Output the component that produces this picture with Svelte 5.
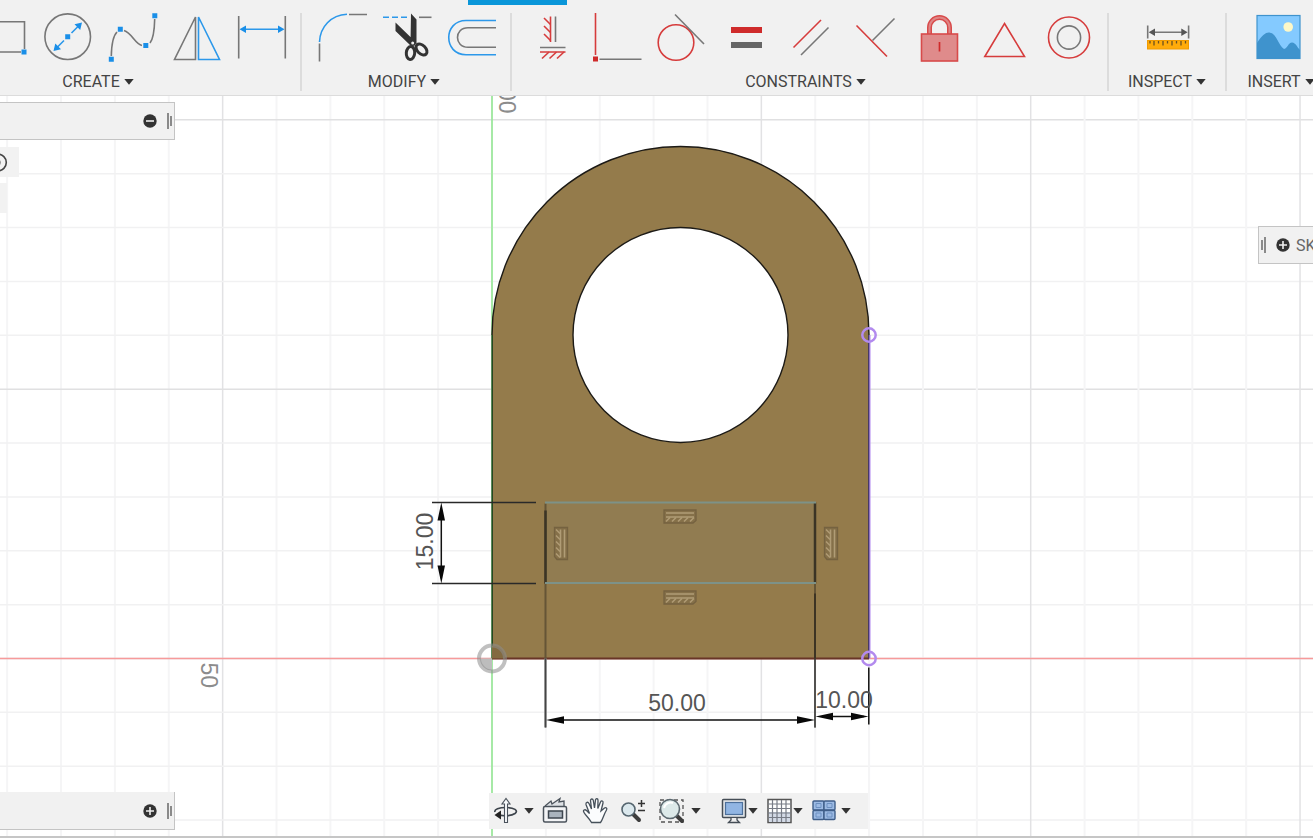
<script>
  const steps = Array.from({ length: 61 }, (_, i) => i - 20);
  const pitch = 53.87;
  const hatches = [0, 1, 2];
  const badges = [
    { x: 188, y: -142, turn: 0 },
    { x: 188, y: -61, turn: 0 },
    { x: 69, y: -115, turn: 90 },
    { x: 339, y: -115, turn: 90 }
  ];
</script>

{#snippet caret()}
  <svg class="caret" viewBox="0 0 10 6" aria-hidden="true"><path d="M0.300 0H9.700L5 5.800Z" fill="#333" /></svg>
{/snippet}

{#snippet knob(open)}
  <svg class="knob" viewBox="0 0 14 14" aria-hidden="true">
    <circle cx="7" cy="7" r="6.7" fill="#333" />
    <path d={open ? 'M3 7H11' : 'M3 7H11M7 3V11'} stroke="#f1f1f1" stroke-width="1.6" />
  </svg>
{/snippet}

<div class="app">
  <header class="ribbon">
    <span class="active-tab"></span>

    <section class="group create">
      <div class="tools">
        <button aria-label="Rectangle"><svg viewBox="0 0 65 54">
          <path class="gray" d="M20 8.7H56.5V36M53 39H20" />
          <rect x="53.5" y="36.5" width="5" height="5" fill="#1a8fe8" />
        </svg></button>
        <button aria-label="Circle"><svg viewBox="0 0 65 54">
          <circle class="gray" cx="34.7" cy="23.7" r="22.8" />
          <path class="blue" d="M38.5 20L45 13.500M31 27.500L24.500 34" />
          <path fill="#1a8fe8" d="M49 9.500L41.500 11.300L47.200 17ZM20.500 38L28 36.200L22.300 30.500ZM32.200 21.200h5v5h-5z" />
        </svg></button>
        <button aria-label="Spline"><svg viewBox="0 0 65 54">
          <path class="gray" d="M13.300 43C13.500 33 15 23 19 19M26 17.500C34 20 37 31 44 32.500M52 30C56 25 56.500 15 56.700 6" />
          <path fill="#1a8fe8" d="M10.800 43.700h5v5h-5zM19.800 13.700h5v5h-5zM45.300 30h5v5h-5zM54.300 0.300h5v5h-5z" />
        </svg></button>
        <button aria-label="Mirror"><svg viewBox="0 0 65 54">
          <path class="gray" d="M32.500 4V46.500H11.500Z" />
          <path class="blue" d="M35.500 4V46.500H56.500Z" />
        </svg></button>
        <button aria-label="Sketch dimension"><svg viewBox="0 0 65 54">
          <path class="gray" d="M10.700 3V45.500M57.300 3V45.500" />
          <path class="blue" d="M15 16.300H53" />
          <path fill="#1a8fe8" d="M11.500 16.300L18 12.500V20ZM56.500 16.300L50 12.500V20Z" />
        </svg></button>
      </div>
      <button class="menu">CREATE {@render caret()}</button>
    </section>

    <section class="group modify">
      <div class="tools">
        <button aria-label="Fillet"><svg viewBox="0 0 65 54">
          <path class="blue" d="M11.500 29C12 14 23 2 39 1.300" />
          <path class="gray" d="M41 1.500H59M11.500 30.500V48.500" />
        </svg></button>
        <button aria-label="Trim"><svg viewBox="0 0 65 54">
          <path class="blue" d="M10 4.300H36" stroke-dasharray="6 3" />
          <path class="gray" d="M46 4.300H58.500" />
          <path fill="#333" d="M22.500 9.500L39 25.500L40.500 31L37 32L22.500 18ZM38 0.500L43.500 6.500V31L37.500 30Z" />
          <ellipse class="loop" cx="37.500" cy="40" rx="4.200" ry="6.500" transform="rotate(5 37.500 40)" />
          <ellipse class="loop" cx="48.500" cy="36.500" rx="4.200" ry="6.500" transform="rotate(-45 48.500 36.500)" />
          <circle cx="39.700" cy="30" r="3" fill="#333" /><circle cx="39.700" cy="30" r="1.500" fill="#eee" />
        </svg></button>
        <button aria-label="Offset"><svg viewBox="0 0 65 54">
          <path class="blue" d="M58 7.500H28C5 7.500 5 41.700 28 41.700H58" />
          <path class="gray" d="M58 14.700H30C16 14.700 16 34.300 30 34.300H58" />
        </svg></button>
      </div>
      <button class="menu">MODIFY {@render caret()}</button>
    </section>

    <section class="group constraints">
      <div class="tools">
        <button aria-label="Horizontal/Vertical"><svg viewBox="0 0 65 54">
          <path class="gray" d="M38.500 3.500V29M23 34.500H48.500" />
          <path class="red" d="M33.500 3.500V29M23 39H48.500" />
          {#each hatches as i}
            <path class="red" d="M27 {5 + i * 8}L33.500 {11.5 + i * 8}" />
            <path class="red" d="M{32 + i * 7.5} 39L{25 + i * 7.5} 45.500" />
          {/each}
        </svg></button>
        <button aria-label="Coincident"><svg viewBox="0 0 65 54">
          <path class="red" d="M13.500 0V42" />
          <rect x="11" y="43.500" width="5" height="5" fill="#cf2b2b" />
          <path class="gray" d="M17.500 46.300H59.500" />
        </svg></button>
        <button aria-label="Tangent"><svg viewBox="0 0 65 54">
          <circle class="red" cx="29" cy="29.500" r="17.800" />
          <path class="gray" d="M28 1.500L57 31" />
        </svg></button>
        <button aria-label="Equal"><svg viewBox="0 0 65 54">
          <rect x="19" y="14" width="31" height="6" fill="#cf2b2b" />
          <rect x="19" y="29" width="31" height="6" fill="#666" />
        </svg></button>
        <button aria-label="Parallel"><svg viewBox="0 0 65 54">
          <path class="red" d="M16.500 34.500L44 7" />
          <path class="gray" d="M24 42L51.500 14.500" />
        </svg></button>
        <button aria-label="Perpendicular"><svg viewBox="0 0 65 54">
          <path class="gray" d="M30.500 27.500L52.500 5.500" />
          <path class="red" d="M14.500 12.500L45 43.500" />
        </svg></button>
        <button aria-label="Fix"><svg viewBox="0 0 65 54">
          <path d="M22.500 21V14.500A10 10 0 0 1 42.500 14.500V21" fill="none" stroke="#d84a4a" stroke-width="5" />
          <path d="M22.500 21V14.500A10 10 0 0 1 42.500 14.500V21" fill="none" stroke="#df8585" stroke-width="2" />
          <rect x="14.500" y="21" width="36" height="27" fill="#df8b8b" stroke="#d84a4a" stroke-width="1.600" />
          <path d="M32.500 29V38.500" stroke="#cf2b2b" stroke-width="1.700" />
        </svg></button>
        <button aria-label="Midpoint"><svg viewBox="0 0 65 54">
          <path class="red" d="M32.500 10.500L52.500 43.500H12.800Z" />
        </svg></button>
        <button aria-label="Concentric"><svg viewBox="0 0 65 54">
          <circle class="red" cx="32" cy="24.500" r="20.500" />
          <circle class="gray" cx="32" cy="24.500" r="11.600" />
        </svg></button>
      </div>
      <button class="menu">CONSTRAINTS {@render caret()}</button>
    </section>

    <section class="group inspect">
      <div class="tools">
        <button aria-label="Measure"><svg viewBox="0 0 65 54">
          <path class="gray" d="M13.700 12.500V25.500M54.600 12.500V25.500M18 19.300H50" />
          <path fill="#555" d="M14.700 19.300L21 15.500V23ZM53.600 19.300L47.300 15.500V23Z" />
          <rect x="13.500" y="27.500" width="41" height="8.500" fill="#ffab0a" stroke="#f09a00" />
          <path d="M16 28v2.500M20 28v4.500M24.500 28v2.500M29 28v4.500M33.500 28v2.500M38 28v4.500M42.500 28v2.500M47 28v4.500M51.500 28v2.500" stroke="#6b5020" stroke-width="1.300" />
        </svg></button>
      </div>
      <button class="menu">INSPECT {@render caret()}</button>
    </section>

    <section class="group insert">
      <div class="tools">
        <button aria-label="Insert canvas"><svg viewBox="0 0 65 54">
          <rect x="10" y="2.500" width="43" height="43" fill="#84caff" />
          <path d="M10 30C15 22 19 19 22.500 19.500C30 21 31 32 37 36C41 35 41 29.500 45 29.500C49 30 50 34 53 37V45.500H10Z" fill="#3f93cd" />
          <circle cx="41.200" cy="14" r="4.800" fill="#fdf8c8" />
          <rect x="10" y="2.500" width="43" height="43" fill="none" stroke="#3f93cd" stroke-width="1.200" />
        </svg></button>
      </div>
      <button class="menu">INSERT {@render caret()}</button>
    </section>
  </header>

  <main class="workspace">
    <svg class="drawing" role="img" aria-label="Sketch of a rounded plate with a hole and dimensions">
      <g transform="translate(492 562.500)">
        {#each steps as n}
          <path d="M{n * pitch} -600V400" stroke={n % 5 ? '#f5f5f6' : '#e2e2e4'} stroke-width={n % 5 ? 2 : 1.5} />
          <path d="M-600 {-n * pitch}H2500" stroke={n % 5 ? '#f1f1f2' : '#e0e0e1'} stroke-width="1.500" />
        {/each}
        <path d="M-600 0H2500" stroke="#f79a9a" stroke-width="1.500" />
        <path d="M0 -600V400" stroke="#8fe88f" stroke-width="1.500" />

        <path d="M0 0V-323.500A188.500 188.500 0 0 1 377 -323.500V0Z" fill="#947b4b" />
        <path d="M0 -323.500A188.500 188.500 0 0 1 377 -323.500" fill="none" stroke="#1c1a16" stroke-width="1.400" />
        <circle cx="188.500" cy="-323.500" r="107.500" fill="#fff" stroke="#1c1a16" stroke-width="1.400" />
        <path d="M0.200 -323.500V0" stroke="#1f4420" stroke-width="1.500" />
        <path d="M0 0H377" stroke="#693527" stroke-width="2" />
        <path d="M377.800 -323.500V0" stroke="#b690f0" stroke-width="1.500" />
        <path d="M376.700 -323.500V0" stroke="#44366b" stroke-width="1.300" />

        <rect x="53.500" y="-156" width="270" height="81" fill="#917c51" />
        <path d="M53.500 -155V0M323 -75V0" stroke="#655536" stroke-width="2" />
        <path d="M53.500 -148V-75M323 -156V-75" stroke="#3b3425" stroke-width="2.500" />
        <path d="M323 -65V69" stroke="#28231b" stroke-width="1.300" />
        <path d="M53.500 0V69" stroke="#888" stroke-width="2.500" />
        <path d="M53.500 0V69M323 0V69" stroke="#444" stroke-width="1.300" />
        <path d="M53 -156H324M53 -75.500H324" stroke="#7d9288" stroke-width="2" />

        {#each badges as b}
          <g transform="translate({b.x} {b.y}) rotate({b.turn})" fill="none">
            <path d="M-16 -6.500H16V4L13 6.500H-16Z" fill="#857049" stroke="#756240" stroke-width="1.300" />
            <path d="M-14 -3.500H14M-14 0.500H14" stroke="#b09c75" stroke-width="1.600" />
            <path d="M-14 5L-10 1M-8 5L-4 1M-2 5L2 1M4 5L8 1M10 5L14 1" stroke="#b09c75" stroke-width="1.500" />
          </g>
        {/each}

        <path d="M0 -13A13 13 0 0 1 13 0H0Z" fill="#836a40" />
        <path d="M0 0V12A12 12 0 0 1 -12 0Z" fill="#bdbdbd" />
        <circle r="13" fill="none" stroke="#8c8c8c" stroke-opacity="0.550" stroke-width="4" />

        <path d="M-60 -156H44M-60 -75H44" stroke="#292929" stroke-width="1.500" />
        <path d="M-50.700 -150V-80M60 61.500H318M330 58H372M376.800 9V66" stroke="#111" stroke-width="1.500" />
        <g fill="#080808">
          <path d="M-50.700 -156L-54.500 -138H-47ZM-50.700 -75L-54.500 -93H-47Z" />
          <path d="M54 61.500L72 57.700V65.300ZM323 61.500L305 57.700V65.300Z" />
          <path d="M323.500 58L341 54.200V61.800ZM376.500 58L359 54.200V61.800Z" />
        </g>
        <g class="dim">
          <text x="185" y="52" text-anchor="middle">50.00</text>
          <text x="352" y="49" text-anchor="middle">10.00</text>
          <text transform="translate(-59 -117) rotate(-90)" text-anchor="middle">15.00</text>
        </g>
        <g class="scale">
          <text transform="translate(-291 4) rotate(90)">50</text>
          <text transform="translate(7 -545) rotate(90)" text-anchor="end">00</text>
        </g>
        <g fill="none" stroke="#b28aee" stroke-width="2.500">
          <circle cx="377" cy="-323.500" r="6.700" />
          <circle cx="377" cy="0" r="6.700" />
        </g>
      </g>
    </svg>

    <aside class="left-side">
      <div class="panel">
        <button aria-label="Collapse browser">{@render knob(true)}</button><span class="grip"></span>
      </div>
      <div class="row eye">
        <svg viewBox="0 0 18 30" aria-hidden="true"><circle cx="-2" cy="15.500" r="8.300" fill="none" stroke="#444" stroke-width="1.600" /><circle cx="-3" cy="15.500" r="3.500" fill="#444" /></svg>
      </div>
      <div class="row short"></div>
    </aside>

    <aside class="panel comments">
      <button aria-label="Expand comments">{@render knob(false)}</button><span class="grip"></span>
    </aside>

    <aside class="panel palette">
      <span class="grip flip"></span><button aria-label="Expand palette">{@render knob(false)}</button><span>SK</span>
    </aside>

    <nav class="view-bar" aria-label="View controls">
      <button class="spaced" aria-label="Orbit">
        <svg class="i28" viewBox="0 0 28 28">
          <path d="M6 17.500C10 19.500 19 19 23 16.500C27 13.500 22 10.500 14 10.500C7 10.500 2 12.500 3 15" fill="none" stroke="#3d444c" stroke-width="1.700" />
          <path d="M12.500 25.500V7H10L14 1.500L18 7H15.500V25.500Z" fill="#f8fafc" stroke="#4b535c" stroke-width="1.100" />
          <path d="M2.500 18L9 13.500V22.500Z" fill="#222" />
        </svg>{@render caret()}
      </button>
      <button aria-label="Look at"><svg class="i28" viewBox="0 0 28 28">
        <path d="M4 9L10 4L11 7L19 1.500L18 5L23 4V9" fill="#dde1e5" stroke="#4b535c" stroke-width="1.300" />
        <rect x="2.500" y="9.500" width="23" height="15.500" rx="1.500" fill="#f3f4f6" stroke="#4b535c" stroke-width="1.500" />
        <rect x="7.500" y="14" width="14" height="7" fill="#aab4be" stroke="#3e464f" stroke-width="1.500" />
      </svg></button>
      <button class="wide" aria-label="Pan"><svg class="i28" viewBox="0 0 28 28">
        <path d="M10.500 25.500C8 21 5 19 3 15.500C1.500 13 4 12 5.500 13.500L8.500 16.500L5 7.500C4.500 5 7 4.500 8 6.500L10.500 12L9.500 3.500C9.500 1.500 12 1.500 12.300 3.500L13.500 11L14.500 3C15 1 17.200 1.500 17 3.500L16.800 11.500L19.500 5C20.500 3 22.500 4 22 6L20 14L23.500 11C25 10 26.500 11.500 25.500 13C22.500 18 22 22 19.500 25.500Z" fill="#fbfcfd" stroke="#46505a" stroke-width="1.300" />
      </svg></button>
      <button aria-label="Zoom"><svg class="i28" viewBox="0 0 28 28">
        <path d="M13 17L19 23" stroke="#3d3d3d" stroke-width="4" stroke-linecap="round" />
        <circle cx="8.500" cy="12.500" r="6.500" fill="#dbe8ed" stroke="#55656f" stroke-width="1.600" />
        <path d="M18 6.500H25M21.500 3V10M18 13.500H25" stroke="#333" stroke-width="1.500" />
      </svg></button>
      <button class="spaced" aria-label="Zoom window">
        <svg class="i32" viewBox="0 0 32 28">
          <rect x="5" y="3" width="23" height="22" fill="none" stroke="#555" stroke-width="1.300" stroke-dasharray="4 3" />
          <path d="M21 18L27 24" stroke="#3d3d3d" stroke-width="4" stroke-linecap="round" />
          <circle cx="15" cy="12" r="9.500" fill="#dce9e9" stroke="#5b686f" stroke-width="1.600" />
          <path d="M9 11C10 6 15 5 18 6" fill="none" stroke="#fff" stroke-width="2" />
        </svg>{@render caret()}
      </button>
      <button class="apart" aria-label="Display settings">
        <svg class="i28" viewBox="0 0 28 28">
          <rect x="2.500" y="2.500" width="23" height="18" rx="1" fill="#e4e7ea" stroke="#454d56" stroke-width="1.500" />
          <rect x="5.500" y="5.500" width="17" height="12" fill="#91b5e3" stroke="#4d709c" stroke-width="1.200" />
          <path d="M11 21V23L8.500 25.500H19.500L17 23V21" fill="#eee" stroke="#454d56" stroke-width="1.300" />
        </svg>{@render caret()}
      </button>
      <button aria-label="Grid and snaps">
        <svg class="i28" viewBox="0 0 28 28">
          <rect x="3" y="2.500" width="23" height="23" fill="#fff" stroke="#555" stroke-width="1.500" />
          <rect x="4" y="15" width="21" height="10" fill="#d3dae6" />
          <path d="M7.500 3V25M12 3V25M16.500 3V25M21 3V25M3 7H26M3 11.500H26M3 16H26M3 20.500H26" stroke="#777c86" stroke-width="1.200" />
        </svg>{@render caret()}
      </button>
      <button class="last" aria-label="Viewports">
        <svg class="i28" viewBox="0 0 28 28">
          <g fill="#9dbbe4" stroke="#3f5e89" stroke-width="1.400">
            <rect x="3" y="4" width="11" height="9" rx="1" /><rect x="14" y="4" width="11" height="9" rx="1" />
            <rect x="3" y="13.500" width="11" height="9" rx="1" /><rect x="14" y="13.500" width="11" height="9" rx="1" />
          </g>
          <path d="M6 6.500h5v4h-5zM17 6.500h5v4h-5zM6 16h5v4h-5zM17 16h5v4h-5z" fill="none" stroke="#6c90c1" />
        </svg>{@render caret()}
      </button>
    </nav>
  </main>
</div>

<style>
  :global(body) { margin: 0; }
  .app {
    display: flex;
    flex-direction: column;
    height: 100vh;
    overflow: hidden;
    font-family: Roboto, "Liberation Sans", sans-serif;
    color: #444;
  }
  button {
    margin: 0;
    padding: 0;
    border: 0;
    background: none;
    font: inherit;
    color: inherit;
    display: flex;
    align-items: center;
  }
  svg { display: block; flex: none; overflow: visible; }

  .ribbon {
    position: relative;
    display: flex;
    flex: none;
    padding: 13px 0 4px;
    background: #f1f1f1;
    border-bottom: 1px solid #dcdcdc;
  }
  .active-tab {
    position: absolute;
    top: 0;
    left: 468px;
    width: 99px;
    height: 5px;
    background: #0a96d9;
  }
  .group {
    box-sizing: border-box;
    flex: none;
    display: flex;
    flex-direction: column;
    align-items: center;
    gap: 5px;
    border-right: 2px solid #dcdcdc;
  }
  .tools { display: flex; align-self: stretch; }
  .tools svg { width: 65px; height: 54px; }
  .create { width: 406px; margin-left: -104px; }
  .create .tools { justify-content: flex-end; padding-right: 7px; }
  .modify { width: 210px; }
  .modify .tools { padding-left: 6px; }
  .modify .menu { padding-right: 4px; }
  .constraints { width: 597px; }
  .constraints .tools { padding-left: 5px; }
  .constraints .menu { padding-right: 8px; }
  .inspect { width: 118px; }
  .inspect .tools { padding-left: 25px; }
  .insert { width: 108px; border-right: 0; }
  .insert .tools { padding-left: 20px; }
  .menu { gap: 4px; font-size: 16px; line-height: 19px; white-space: nowrap; }
  .caret { width: 10px; height: 6px; }
  .gray, .blue, .red { fill: none; stroke-width: 1.6px; }
  .gray { stroke: #777; }
  .blue { stroke: #2c98ea; }
  .red { stroke: #d63c3c; }
  .loop { fill: none; stroke: #333; stroke-width: 3px; }

  .workspace {
    position: relative;
    flex: 1;
    min-height: 0;
    overflow: hidden;
    background: #fff;
    border-bottom: 2px solid #c6c6c6;
  }
  .drawing { width: 100%; height: 100%; }
  .dim text { font-family: "Liberation Sans", sans-serif; font-size: 23px; fill: #555; }
  .scale text { font-family: "Liberation Sans", sans-serif; font-size: 23px; fill: #8c8c8c; }

  .panel {
    box-sizing: border-box;
    display: flex;
    align-items: center;
    height: 38px;
    background: #f1f1f1;
    border: 1px solid #c4c4c4;
    font-size: 16px;
    color: #666;
  }
  .knob { width: 14px; height: 14px; }
  .grip {
    box-sizing: border-box;
    flex: none;
    width: 5px;
    height: 16px;
    border-left: 2px solid #8a8a8a;
    background: linear-gradient(#8a8a8a, #8a8a8a) right center / 2px 10px no-repeat;
  }
  .flip { transform: rotate(180deg); }
  .left-side { position: absolute; top: 6px; left: 0; width: 175px; }
  .left-side .panel, .comments { justify-content: flex-end; gap: 10px; padding-right: 2px; border-left: 0; }
  .row { height: 30px; background: #f2f2f2; overflow: hidden; }
  .eye { width: 19px; margin-top: 7px; }
  .eye svg { width: 18px; height: 30px; }
  .short { width: 7px; margin-top: 6px; }
  .comments { position: absolute; bottom: 6px; left: 0; width: 175px; border-top: 0; }
  .palette { position: absolute; top: 130px; right: 0; width: 55px; gap: 6px; padding-left: 2px; border-right: 0; overflow: hidden; }
  .palette button { margin-left: 4px; }

  .view-bar {
    position: absolute;
    bottom: 7px;
    left: 489px;
    display: flex;
    align-items: center;
    gap: 7px;
    height: 36px;
    padding: 0 17px 0 3px;
    background: #f1f1f1;
  }
  .i28 { width: 28px; height: 28px; }
  .i32 { width: 32px; height: 28px; }
  .spaced { gap: 4px; }
  .wide { padding: 0 4px 0 5px; }
  .apart { margin-left: 12px; }
  .last { gap: 3px; }
</style>
